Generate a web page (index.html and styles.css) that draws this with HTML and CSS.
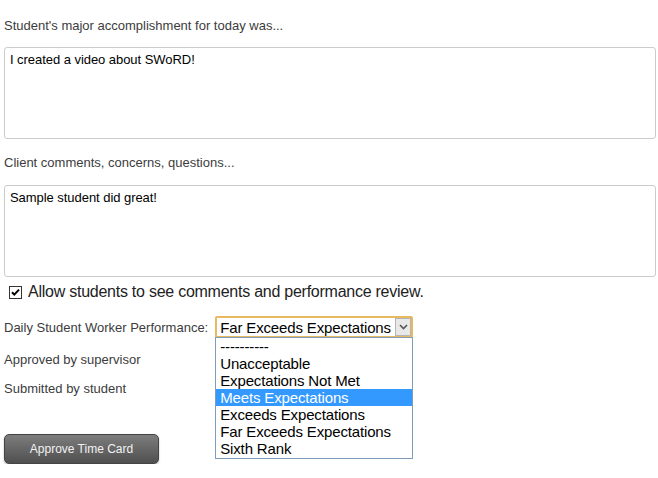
FILE: index.html
```html
<!DOCTYPE html>
<html>
<head>
<meta charset="utf-8">
<link rel="stylesheet" href="styles.css">
</head>
<body>
<form class="form">
  <div class="label">Student's major accomplishment for today was...</div>
  <textarea class="area" readonly>I created a video about SWoRD!</textarea>
  <div class="label label-second">Client comments, concerns, questions...</div>
  <textarea class="area" readonly>Sample student did great!</textarea>
  <div class="check-row">
    <span class="checkbox"><svg width="11" height="11" viewBox="0 0 11 11"><path d="M2 5.2 L4.3 7.6 L9 2.6" fill="none" stroke="#000" stroke-width="2"/></svg></span>
    <span class="check-label">Allow students to see comments and performance review.</span>
  </div>
  <div class="perf-row">
    <span class="label-inline">Daily Student Worker Performance:</span>
    <div class="select-wrap">
      <div class="select">
        <span class="select-value">Far Exceeds Expectations</span>
        <span class="select-arrow"><svg width="9" height="6" viewBox="0 0 9 6"><path d="M1 1 L4.5 4.5 L8 1" fill="none" stroke="#555" stroke-width="1.6"/></svg></span>
      </div>
      <ul class="options">
        <li>----------</li>
        <li>Unacceptable</li>
        <li>Expectations Not Met</li>
        <li class="selected">Meets Expectations</li>
        <li>Exceeds Expectations</li>
        <li>Far Exceeds Expectations</li>
        <li>Sixth Rank</li>
      </ul>
    </div>
  </div>
  <div class="status">Approved by supervisor</div>
  <div class="status">Submitted by student</div>
  <button type="button" class="btn">Approve Time Card</button>
</form>
</body>
</html>
```
FILE: styles.css
```css
html, body {
  margin: 0;
  padding: 0;
  background: #fff;
}
body {
  font-family: "Liberation Sans", Arial, sans-serif;
  font-size: 13px;
  color: #333;
}
.form {
  padding: 17px 3px 0 4px;
  display: flex;
  flex-direction: column;
  align-items: flex-start;
}
.label {
  line-height: 18px;
  height: 18px;
  color: #3c3c3c;
  margin-bottom: 12px;
}
.label-second {
  margin-top: 15px;
  margin-bottom: 13px;
}
.area {
  box-sizing: border-box;
  width: 652px;
  height: 92px;
  margin: 0;
  padding: 4px 5px;
  border: 1px solid #ccc;
  border-radius: 3px;
  font-family: "Liberation Sans", Arial, sans-serif;
  font-size: 13px;
  letter-spacing: -0.05px;
  line-height: 16px;
  color: #000;
  resize: none;
  overflow: hidden;
  outline: none;
}
.check-row {
  display: flex;
  align-items: center;
  margin-top: 6px;
  height: 18px;
  padding-left: 5px;
}
.checkbox {
  box-sizing: border-box;
  width: 13px;
  height: 13px;
  border: 1px solid #333;
  background: #fff;
  display: flex;
  align-items: center;
  justify-content: center;
  margin-right: 6px;
}
.checkbox svg { display: block; }
.check-label {
  font-size: 16px;
  letter-spacing: -0.25px;
  color: #222;
  line-height: 18px;
}
.perf-row {
  display: flex;
  align-items: center;
  margin-top: 15px;
  height: 22px;
}
.label-inline {
  color: #3c3c3c;
  margin-right: 7px;
}
.select-wrap {
  position: relative;
}
.select {
  box-sizing: border-box;
  width: 198px;
  height: 22px;
  border: 2px solid #e8b960;
  border-radius: 2px;
  background: #fff;
  display: flex;
  align-items: center;
  justify-content: space-between;
  padding-left: 3px;
}
.select-value {
  font-size: 15px;
  letter-spacing: -0.15px;
  color: #000;
}
.select-arrow {
  box-sizing: border-box;
  width: 16px;
  height: 18px;
  background: #e8e8e8;
  border: 1px solid #b5b5b5;
  display: flex;
  align-items: center;
  justify-content: center;
}
.options {
  position: absolute;
  left: 0;
  top: 21px;
  box-sizing: border-box;
  width: 198px;
  margin: 0;
  padding: 0 0 1px 0;
  list-style: none;
  background: #fff;
  border: 1px solid #7f9db9;
  z-index: 2;
}
.options li {
  font-size: 15px;
  letter-spacing: -0.15px;
  line-height: 17px;
  height: 17px;
  padding-left: 4px;
  color: #000;
}
.options li.selected {
  background: #3399ff;
  color: #fff;
}
.status {
  color: #3c3c3c;
  line-height: 18px;
  margin-top: 13px;
}
.status + .status {
  margin-top: 11px;
}
.btn {
  margin-top: 36px;
  width: 155px;
  height: 30px;
  border: 1px solid #444;
  border-radius: 5px;
  background: linear-gradient(#7d7d7d, #4f4f4f);
  color: #f2f2f2;
  font-family: "Liberation Sans", Arial, sans-serif;
  font-size: 12px;
  box-shadow: 0 1px 2px rgba(0,0,0,0.3);
  padding: 0;
}
```
